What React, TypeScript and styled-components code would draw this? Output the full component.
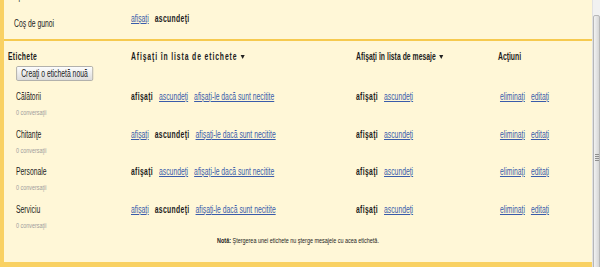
import React from "react";
import styled, { createGlobalStyle } from "styled-components";

const FONT = `"Liberation Sans", Arial, sans-serif`;
/* The reference text is set in a tall, horizontally condensed face; the
   content canvas is laid out at natural width and squeezed horizontally. */
const SQUEEZE = 0.68;
const u = (px: number) => `${(px / SQUEEZE).toFixed(2)}px`;

const Global = createGlobalStyle`
  html, body { margin: 0; padding: 0; background: #fff7d7; }
  body { font-family: ${FONT}; }
`;

const Frame = styled.div`
  display: flex;
  width: 600px;
  height: 267px;
  overflow: hidden;
`;

const Panel = styled.div`
  flex: 1;
  box-sizing: border-box;
  height: 267px;
  background: #fff7d7;
  border-left: 4px solid #f9d163;
  border-bottom: 5px solid #f9d163;
  overflow: hidden;
`;

const Canvas = styled.div`
  width: ${u(588)};
  display: flex;
  flex-direction: column;
  transform: scaleX(${SQUEEZE});
  transform-origin: 0 0;
  font-family: ${FONT};
  font-size: 10px;
  color: #222;
`;

const TopSection = styled.div`
  margin-top: -20px;
  padding: 0 0 5px ${u(10)};
  display: grid;
  grid-template-columns: ${u(117)} 1fr;
  grid-auto-rows: 27px;
`;

const SettingLabel = styled.div`
  padding-top: 10px;
  line-height: 14px;
`;

const LinkGroup = styled.div<{ $top?: number; $indent?: number }>`
  display: flex;
  align-items: flex-start;
  gap: ${u(6)};
  line-height: 14px;
  padding-top: ${(p) => p.$top ?? 0}px;
  padding-left: ${(p) => u(p.$indent ?? 0)};
  white-space: nowrap;
`;

const Link = styled.a`
  color: #3a5caa;
  text-decoration: underline;
  cursor: pointer;
`;

const Strong = styled.b`
  font-weight: bold;
  letter-spacing: 0.5px;
  color: #1c1c1c;
`;

const Divider = styled.div`
  height: 2px;
  background: #f6ca4f;
  flex-shrink: 0;
`;

const LabelsSection = styled.div`
  display: flex;
  flex-direction: column;
  padding: 9px 0 0 ${u(4)};
`;

const Columns = styled.div`
  display: grid;
  grid-template-columns: ${u(123)} ${u(225)} ${u(142)} 1fr;
`;

const HeaderRow = styled(Columns)`
  font-weight: bold;
  line-height: 14px;
  white-space: nowrap;
  color: #1c1c1c;
`;

const HeaderCell = styled.span<{ $spacing?: number }>`
  letter-spacing: ${(p) => p.$spacing ?? 0}px;
`;

const Caret = styled.span`
  display: inline-block;
  width: 0;
  height: 0;
  margin-left: ${u(3)};
  vertical-align: middle;
  border-left: ${u(2.2)} solid transparent;
  border-right: ${u(2.2)} solid transparent;
  border-top: 4px solid #222;
`;

const NewLabelButton = styled.button`
  align-self: flex-start;
  margin: 2px 0 9px ${u(8)};
  height: 15px;
  width: ${u(77)};
  padding: 0;
  box-sizing: border-box;
  font-family: ${FONT};
  font-size: 10px;
  color: #222;
  border: 1px solid #a3a3a3;
  border-radius: 2px;
  background: linear-gradient(#fdfdfd, #dcdcdc);
  white-space: nowrap;
`;

const LabelList = styled.div`
  display: flex;
  flex-direction: column;
  gap: 9.6px;
`;

const NameCell = styled.div`
  padding-left: ${u(8)};
  display: flex;
  flex-direction: column;
`;

const LabelName = styled.span`
  line-height: 14px;
`;

const Count = styled.span`
  margin-top: 4px;
  line-height: 10px;
  font-size: 8px;
  color: #9d9d9d;
`;

const Note = styled.div`
  margin-top: 5px;
  text-align: center;
  font-size: 8px;
  line-height: 10px;
  color: #222;
`;

const Scrollbar = styled.div`
  width: 8px;
  height: 267px;
  box-sizing: border-box;
  padding-top: 15px;
  background: #f1f1f1;
  border-left: 1px solid #e2e2e2;
  display: flex;
  flex-direction: column;
  overflow: hidden;
`;

const Thumb = styled.div`
  flex-shrink: 0;
  height: 285px;
  box-sizing: border-box;
  border: 1px solid #b7b7b7;
  border-radius: 2px;
  background: linear-gradient(to right, #f2f2f2, #d6d6d6);
  display: flex;
  flex-direction: column;
  align-items: center;
  justify-content: center;
  gap: 1px;
`;

const Grip = styled.span`
  width: 4px;
  height: 1px;
  background: #8f8f8f;
`;

type Vis = "show" | "hide";
const labels: { name: string; list: Vis; msg: Vis }[] = [
  { name: "Călătorii", list: "show", msg: "show" },
  { name: "Chitanţe", list: "hide", msg: "show" },
  { name: "Personale", list: "show", msg: "show" },
  { name: "Serviciu", list: "hide", msg: "show" },
];

function Toggle({ value, withUnread }: { value: Vis; withUnread?: boolean }) {
  return (
    <>
      {value === "show" ? <Strong>afişaţi</Strong> : <Link>afişaţi</Link>}
      {value === "hide" ? <Strong>ascundeţi</Strong> : <Link>ascundeţi</Link>}
      {withUnread && <Link>afişaţi-le dacă sunt necitite</Link>}
    </>
  );
}

export default function App() {
  return (
    <>
      <Global />
      <Frame>
        <Panel>
          <Canvas>
            <TopSection>
              <SettingLabel>Spam</SettingLabel>
              <LinkGroup $top={5}>
                <Link>afişaţi</Link>
                <Strong>ascundeţi</Strong>
              </LinkGroup>
              <SettingLabel>Coş de gunoi</SettingLabel>
              <LinkGroup $top={5}>
                <Link>afişaţi</Link>
                <Strong>ascundeţi</Strong>
              </LinkGroup>
            </TopSection>
            <Divider />
            <LabelsSection>
              <HeaderRow>
                <HeaderCell $spacing={0.5}>Etichete</HeaderCell>
                <HeaderCell $spacing={1.3}>
                  Afişaţi în lista de etichete
                  <Caret />
                </HeaderCell>
                <HeaderCell $spacing={0.05}>
                  Afişaţi în lista de mesaje
                  <Caret />
                </HeaderCell>
                <HeaderCell>Acţiuni</HeaderCell>
              </HeaderRow>
              <NewLabelButton>Creaţi o etichetă nouă</NewLabelButton>
              <LabelList>
                {labels.map((l) => (
                  <Columns key={l.name}>
                    <NameCell>
                      <LabelName>{l.name}</LabelName>
                      <Count>0 conversaţii</Count>
                    </NameCell>
                    <LinkGroup>
                      <Toggle value={l.list} withUnread />
                    </LinkGroup>
                    <LinkGroup>
                      <Toggle value={l.msg} />
                    </LinkGroup>
                    <LinkGroup $indent={2}>
                      <Link>eliminaţi</Link>
                      <Link>editaţi</Link>
                    </LinkGroup>
                  </Columns>
                ))}
              </LabelList>
            </LabelsSection>
            <Note>
              <b>Notă:</b> Ştergerea unei etichete nu şterge mesajele cu acea etichetă.
            </Note>
          </Canvas>
        </Panel>
        <Scrollbar>
          <Thumb>
            <Grip />
            <Grip />
            <Grip />
            <Grip />
          </Thumb>
        </Scrollbar>
      </Frame>
    </>
  );
}
